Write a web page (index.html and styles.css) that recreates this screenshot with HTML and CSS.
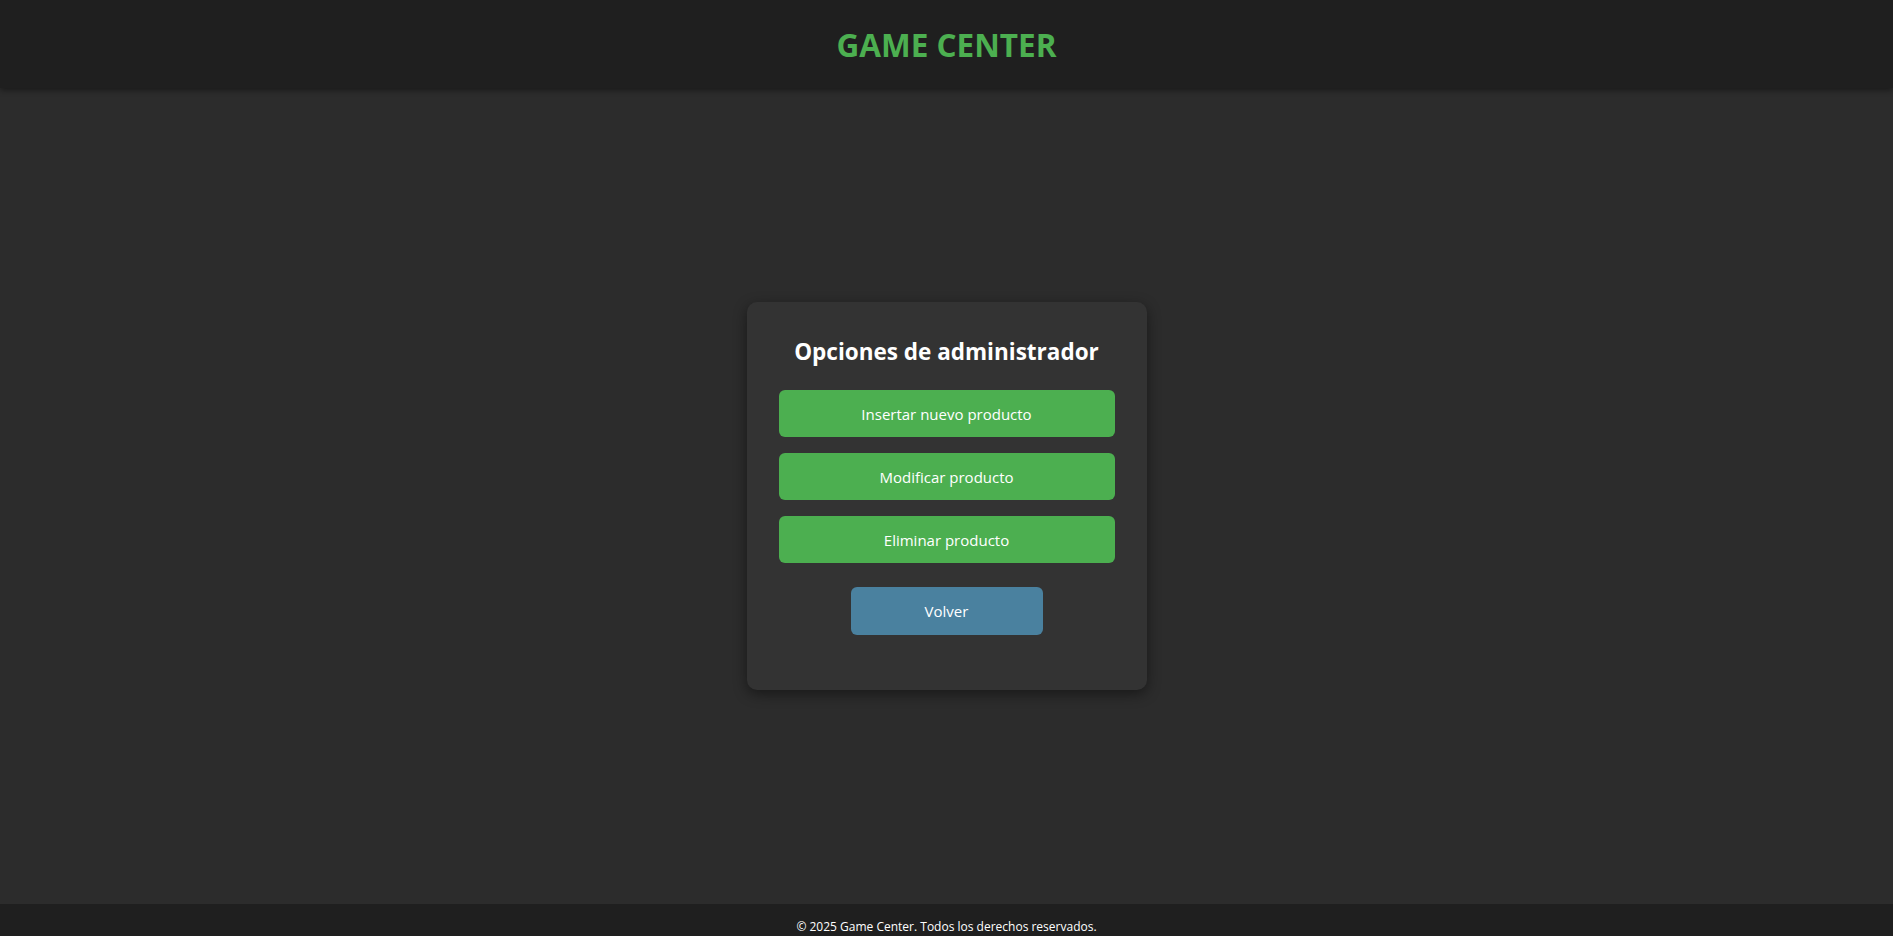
FILE: index.html
```html
<!DOCTYPE html>
<html lang="es">
<head>
<meta charset="utf-8">
<title>Game Center - Administrador</title>
<link rel="stylesheet" href="styles.css">
</head>
<body>
<header class="site-header">
  <h1 class="brand">GAME CENTER</h1>
</header>
<main class="main">
  <section class="card">
    <h2 class="card-title">Opciones de administrador</h2>
    <div class="actions">
      <button class="btn btn-green">Insertar nuevo producto</button>
      <button class="btn btn-green">Modificar producto</button>
      <button class="btn btn-green">Eliminar producto</button>
    </div>
    <button class="btn btn-back">Volver</button>
  </section>
</main>
<footer class="site-footer">
  <p class="footer-text">© 2025 Game Center. Todos los derechos reservados.</p>
</footer>
</body>
</html>
```

FILE: styles.css
```css
* { box-sizing: border-box; }
html, body { margin: 0; padding: 0; }
body {
  height: 100vh;
  display: flex;
  flex-direction: column;
  background: #2c2c2c;
  color: #fff;
  font-family: "Open Sans", "Noto Sans", "Liberation Sans", sans-serif;
  overflow: hidden;
}
.site-header {
  height: 88px;
  flex: none;
  background: #1f1f1f;
  display: flex;
  align-items: center;
  justify-content: center;
  box-shadow: 0 2px 6px rgba(0,0,0,0.45);
  position: relative;
  z-index: 1;
}
.brand {
  margin: 0;
  color: #4caf50;
  font-size: 31.5px;
  font-weight: 700;
  letter-spacing: 0;
}
.main {
  flex: 1;
  display: flex;
  align-items: center;
  justify-content: center;
}
.card {
  width: 400px;
  background: #333333;
  border-radius: 10px;
  padding: 34px 32px 55px;
  box-shadow: 0 4px 14px rgba(0,0,0,0.45);
  display: flex;
  flex-direction: column;
  align-items: center;
}
.card-title {
  margin: 0 0 22px;
  font-size: 22.5px;
  font-weight: 700;
  line-height: 32px;
  color: #fff;
}
.actions {
  width: 100%;
  display: flex;
  flex-direction: column;
  gap: 16px;
}
.btn {
  border: none;
  border-radius: 6px;
  color: #fff;
  font-family: inherit;
  font-size: 15px;
  height: 47px;
  cursor: pointer;
}
.btn-green {
  width: 100%;
  background: #4caf50;
}
.btn-back {
  margin-top: 24px;
  width: 192px;
  height: 48px;
  background: #4a819f;
}
.site-footer {
  flex: none;
  height: 32px;
  background: #1f1f1f;
  display: flex;
  justify-content: center;
  padding-top: 14px;
}
.footer-text {
  margin: 0;
  font-size: 12px;
  line-height: 18px;
}
```
